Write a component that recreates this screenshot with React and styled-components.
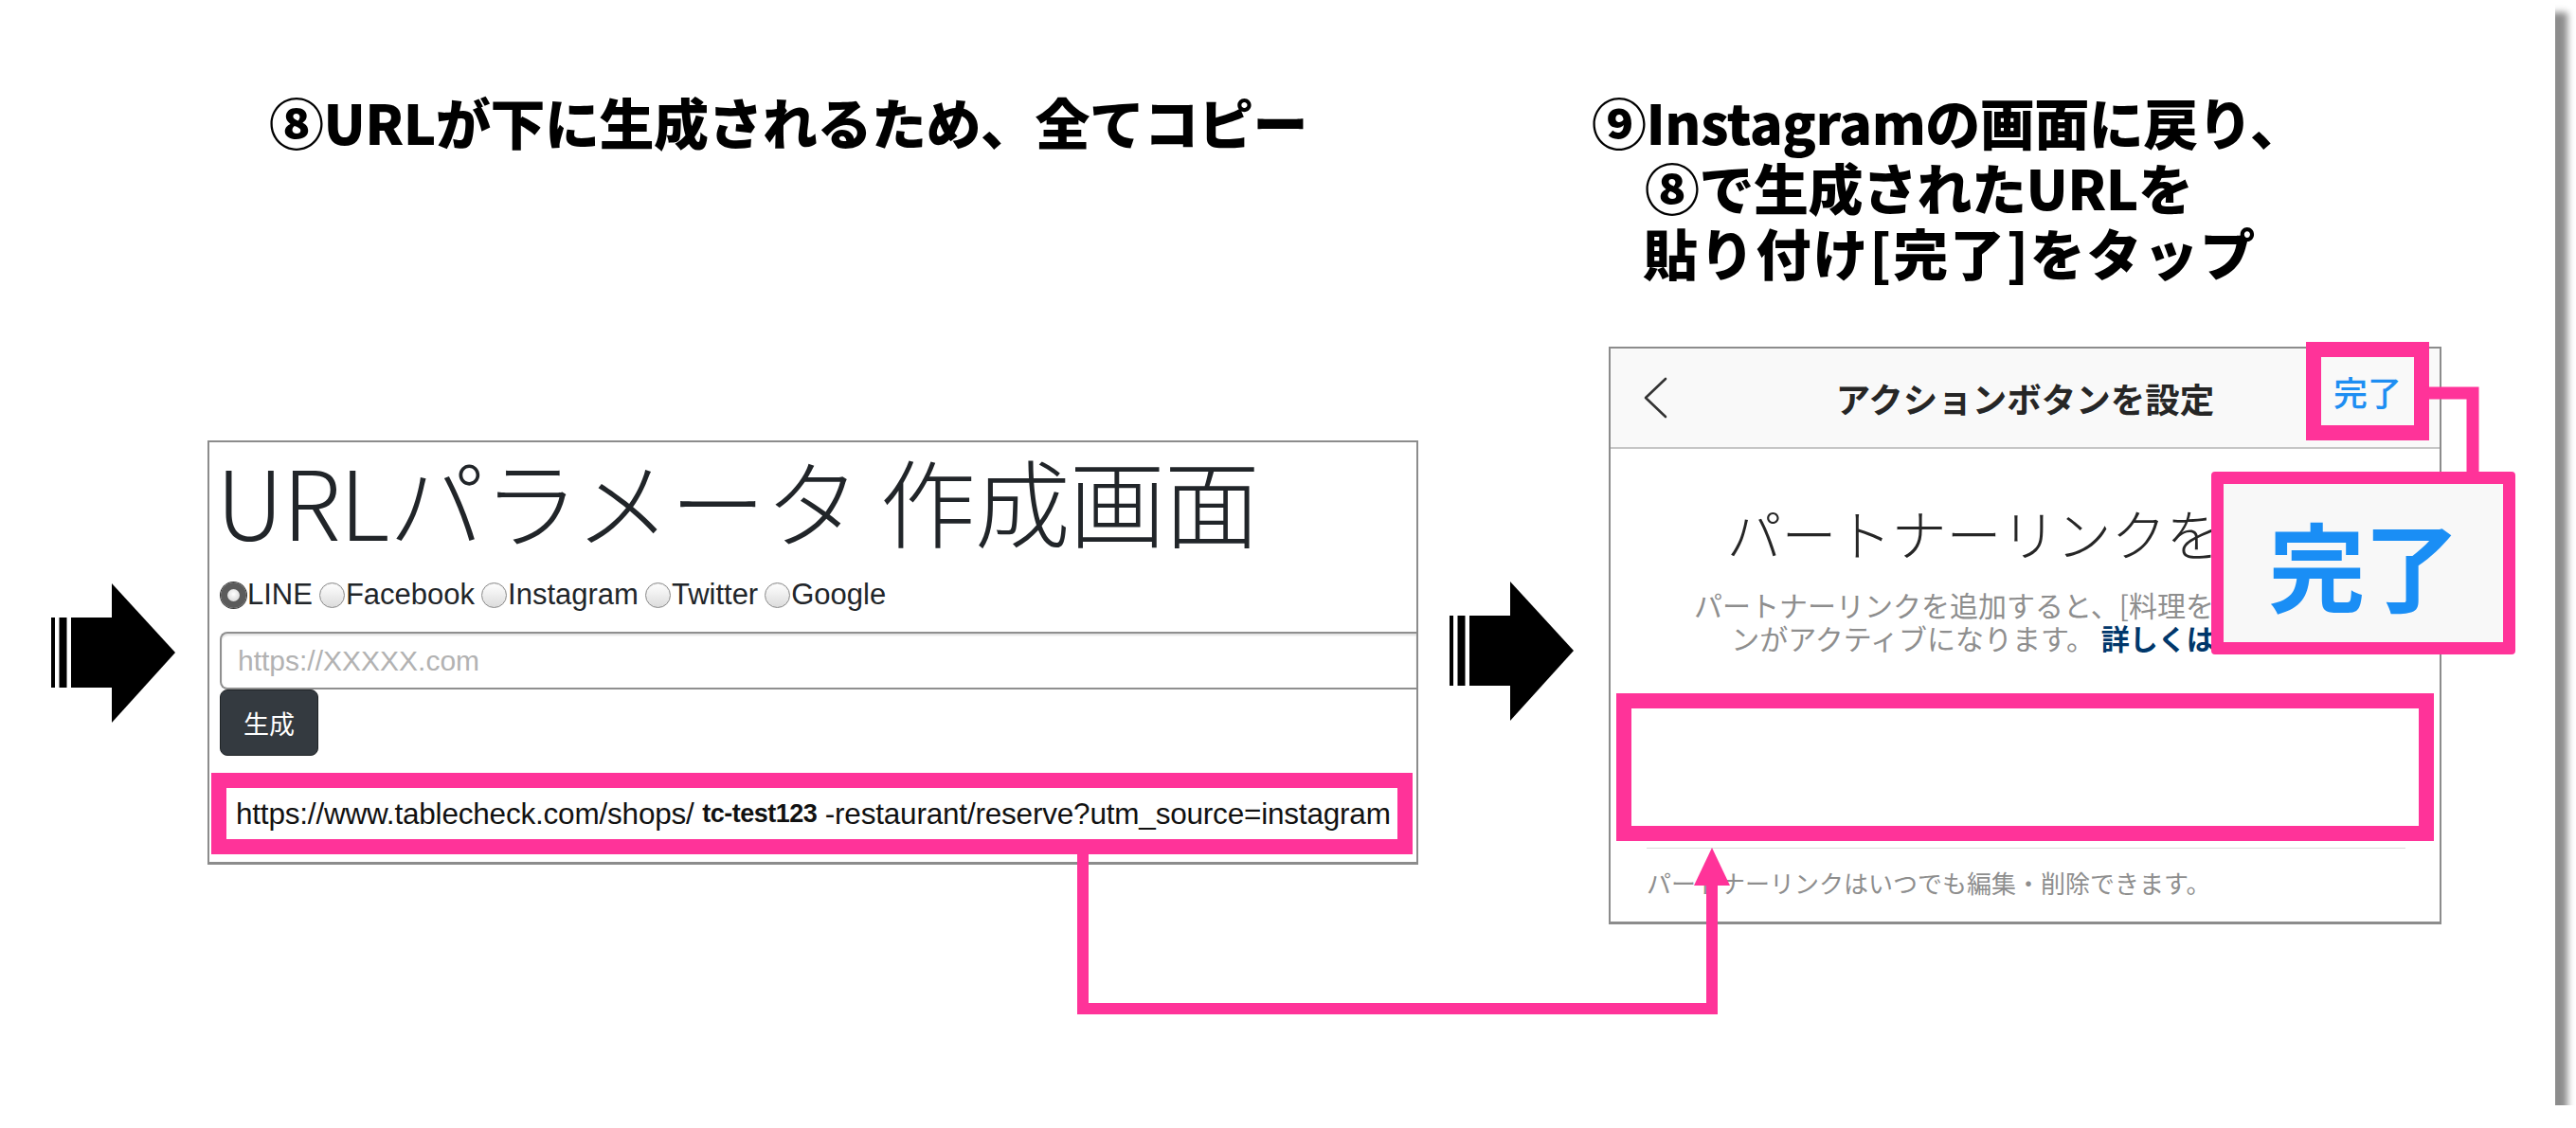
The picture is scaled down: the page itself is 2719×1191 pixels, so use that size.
import React from "react";
import styled, { createGlobalStyle } from "styled-components";

const JP = `"Noto Sans CJK JP", "Noto Sans", sans-serif`;
const LATIN = `"Liberation Sans", Arial, "Noto Sans CJK JP", sans-serif`;
const PINK = "#ff3399";

const Global = createGlobalStyle`
  html, body { margin: 0; padding: 0; background: #ffffff; }
  body { font-family: ${JP}; }
  * { box-sizing: border-box; }
`;

const Card = styled.div`
  position: relative;
  width: 2697px;
  height: 1167px;
  background: #ffffff;
  box-shadow: 13px 13px 7px rgba(0, 0, 0, 0.45);
  display: flex;
`;

const Column = styled.section`
  display: flex;
  flex-direction: column;
  width: ${(p) => (p.$width ? `${p.$width}px` : "auto")};
  flex: ${(p) => (p.$width ? "none" : "1")};
  min-width: 0;
`;

const StepTitle = styled.h2`
  margin: 94px 0 0 ${(p) => p.$left}px;
  font-family: ${JP};
  font-weight: 900;
  font-size: 58px;
  line-height: 69px;
  color: #000;
  white-space: nowrap;
  letter-spacing: -0.5px;
`;

const TitleLine = styled.span`
  display: block;
  padding-left: ${(p) => p.$indent || 0}px;
  letter-spacing: ${(p) => p.$spacing || -0.5}px;
`;

const ContentRow = styled.div`
  display: flex;
  align-items: flex-start;
  margin-top: ${(p) => p.$top}px;
`;

const ArrowBox = styled.div`
  flex: none;
  width: 131px;
  height: 147px;
  margin-left: ${(p) => p.$left}px;
  margin-top: ${(p) => p.$top}px;
  svg { display: block; }
`;

const Arrow = ({ left, top }) => (
  <ArrowBox $left={left} $top={top}>
    <svg width="131" height="147" viewBox="0 0 131 147">
      <rect x="0" y="36" width="4" height="74" fill="#000" />
      <rect x="8.5" y="36" width="8" height="74" fill="#000" />
      <rect x="21" y="36" width="45" height="74" fill="#000" />
      <polygon points="64,0 131,73 64,147" fill="#000" />
    </svg>
  </ArrowBox>
);

/* ---------- left panel (URL parameter form) ---------- */

const FormPanel = styled.div`
  flex: none;
  width: 1278px;
  height: 448px;
  margin-left: 34px;
  border: 2px solid #8c8c8c;
  border-bottom-width: 3px;
  background: #fff;
  padding: 4px 0 0 12px;
`;

const FormHeading = styled.h1`
  margin: 0 0 0 -5px;
  font-family: ${JP};
  font-weight: 300;
  font-size: 101px;
  line-height: 112px;
  color: #212529;
  white-space: nowrap;
  letter-spacing: -1px;
`;

const RadioRow = styled.div`
  display: flex;
  align-items: center;
  margin-top: 27px;
  height: 36px;
  font-family: ${LATIN};
  font-size: 31px;
  color: #212529;
  white-space: nowrap;
`;

const RadioItem = styled.span`
  display: inline-flex;
  align-items: center;
  margin-right: 7px;
`;

const RadioDot = styled.span`
  width: 27px;
  height: 27px;
  border-radius: 50%;
  margin-right: 1px;
  border: ${(p) => (p.$on ? "7px solid #5b5b5b" : "1.5px solid #8a8a8a")};
  background: ${(p) =>
    p.$on
      ? "radial-gradient(circle at 50% 40%, #ffffff, #cfcfcf)"
      : "linear-gradient(#ffffff, #dcdcdc)"};
  box-shadow: ${(p) => (p.$on ? "0 0 0 1px #3a3a3a" : "inset 0 1px 1px rgba(0,0,0,0.08)")};
`;

const UrlInput = styled.input`
  display: block;
  width: 1263px;
  height: 61px;
  margin-top: 21px;
  margin-left: -1px;
  padding: 0 17px;
  border: 2px solid #8f8f8f;
  border-right: none;
  border-radius: 8px 0 0 8px;
  box-shadow: inset 0 2px 2px rgba(0, 0, 0, 0.12);
  font-family: ${LATIN};
  font-size: 30px;
  color: #333;
  background: #fff;
  outline: none;
  &::placeholder { color: #b2b2b2; }
`;

const GenerateButton = styled.button`
  display: block;
  width: 104px;
  height: 70px;
  margin-left: -1px;
  border: 1px solid #1f2326;
  border-radius: 8px;
  background: #343a40;
  color: #ffffff;
  font-family: ${JP};
  font-size: 27px;
  padding: 0;
`;

const UrlHighlight = styled.div`
  width: 1268px;
  height: 86px;
  margin: 18px 0 0 -10px;
  border: 16px solid ${PINK};
  background: #fff;
  display: flex;
  align-items: center;
  padding-left: 10px;
  font-family: ${LATIN};
  font-size: 31.5px;
  letter-spacing: -0.2px;
  color: #111;
  white-space: nowrap;
  overflow: hidden;
`;

const ShopId = styled.span`
  font-family: "Liberation Sans", Arial, sans-serif;
  font-weight: 700;
  font-size: 27px;
  letter-spacing: -0.5px;
`;

/* ---------- right panel (Instagram action button screen) ---------- */

const PhonePanel = styled.div`
  position: relative;
  flex: none;
  width: 879px;
  height: 610px;
  margin-left: 37px;
  border: 2px solid #8c8c8c;
  border-bottom-width: 3px;
  background: #fff;
  display: flex;
  flex-direction: column;
`;

const NavBar = styled.header`
  height: 106px;
  background: #f9f9f9;
  border-bottom: 2px solid #c6c6c6;
  display: grid;
  grid-template-columns: 1fr auto 1fr;
  align-items: center;
`;

const BackButton = styled.span`
  padding-left: 35px;
  display: flex;
  svg { display: block; }
`;

const NavTitle = styled.div`
  font-family: ${JP};
  font-weight: 700;
  font-size: 36.5px;
  color: #262626;
  white-space: nowrap;
`;

const DoneHighlight = styled.span`
  position: relative;
  z-index: 2;
  justify-self: end;
  margin: -14px 11px 0 0;
  border: 16px solid ${PINK};
  width: 130px;
  height: 104px;
  display: flex;
  align-items: center;
  justify-content: center;
  font-family: ${JP};
  font-weight: 500;
  font-size: 36px;
  color: #1e8ef2;
  background: #f9f9f9;
`;

const LinkTitle = styled.div`
  margin-top: 55px;
  padding-left: 8px;
  text-align: center;
  font-family: ${JP};
  font-weight: 300;
  font-size: 58px;
  line-height: 66px;
  color: #262626;
  white-space: nowrap;
`;

const LinkDesc = styled.p`
  margin: 26px 0 0;
  padding-right: 20px;
  text-align: center;
  font-family: ${JP};
  font-size: 30px;
  line-height: 35px;
  color: #8e8e8e;
  white-space: nowrap;
`;

const MoreLink = styled.b`
  font-weight: 700;
  color: #00376b;
`;

const LinkField = styled.div`
  height: 156px;
  margin: 41px 6px 0;
  border: 16px solid ${PINK};
  background: #fff;
`;

const Divider = styled.hr`
  margin: 7px 36px 0 38px;
  border: none;
  border-top: 1px solid #dbdbdb;
`;

const FootNote = styled.div`
  margin: 19px 0 0 38px;
  font-family: ${JP};
  font-size: 26px;
  line-height: 34px;
  color: #8e8e8e;
  white-space: nowrap;
`;

const Callout = styled.div`
  position: absolute;
  z-index: 3;
  left: 634px;
  top: 130px;
  width: 321px;
  height: 193px;
  border: 13px solid ${PINK};
  border-radius: 4px;
  background: #f8f8f8;
  display: flex;
  align-items: center;
  justify-content: center;
  font-family: ${JP};
  font-weight: 700;
  font-size: 102px;
  color: #1a8ef5;
  letter-spacing: -2px;
`;

const Connectors = styled.svg`
  position: absolute;
  left: 0;
  top: 0;
  pointer-events: none;
  z-index: 4;
`;

export default function App() {
  return (
    <>
      <Global />
      <Card>
        <Column $width={1496}>
          <StepTitle $left={284}>⑧URLが下に生成されるため、全てコピー</StepTitle>
          <ContentRow $top={302}>
            <Arrow left={54} top={151} />
            <FormPanel>
              <FormHeading>URLパラメータ 作成画面</FormHeading>
              <RadioRow>
                <RadioItem><RadioDot $on />LINE</RadioItem>
                <RadioItem><RadioDot />Facebook</RadioItem>
                <RadioItem><RadioDot />Instagram</RadioItem>
                <RadioItem><RadioDot />Twitter</RadioItem>
                <RadioItem><RadioDot />Google</RadioItem>
              </RadioRow>
              <UrlInput placeholder="https://XXXXX.com" readOnly />
              <GenerateButton>生成</GenerateButton>
              <UrlHighlight>
                https://www.tablecheck.com/shops/&nbsp;<ShopId>tc-test123</ShopId>&nbsp;-restaurant/reserve?utm_source=instagram
              </UrlHighlight>
            </FormPanel>
          </ContentRow>
        </Column>
        <Column>
          <StepTitle $left={184}>
            <TitleLine>⑨Instagramの画面に戻り、</TitleLine>
            <TitleLine $indent={56}>⑧で生成されたURLを</TitleLine>
            <TitleLine $indent={54} $spacing={1.8}>貼り付け[完了]をタップ</TitleLine>
          </StepTitle>
          <ContentRow $top={65}>
            <Arrow left={34} top={248} />
            <PhonePanel>
              <NavBar>
                <BackButton>
                  <svg width="26" height="44" viewBox="0 0 26 44">
                    <polyline points="23,2 2,22 23,42" fill="none" stroke="#333" strokeWidth="2.6" strokeLinecap="round" strokeLinejoin="round" />
                  </svg>
                </BackButton>
                <NavTitle>アクションボタンを設定</NavTitle>
                <DoneHighlight>完了</DoneHighlight>
              </NavBar>
              <LinkTitle>パートナーリンクを追加</LinkTitle>
              <LinkDesc>
                パートナーリンクを追加すると、[料理を注文]ボタ
                <br />
                ンがアクティブになります。 <MoreLink>詳しくはこちら</MoreLink>
              </LinkDesc>
              <LinkField />
              <Divider />
              <FootNote>パートナーリンクはいつでも編集・削除できます。</FootNote>
              <Callout>完了</Callout>
            </PhonePanel>
          </ContentRow>
        </Column>
        <Connectors width="2697" height="1167" viewBox="0 0 2697 1167">
          <path d="M1143 900 V1065 H1807 V928" fill="none" stroke={PINK} strokeWidth="12" strokeLinejoin="miter" />
          <polygon points="1807,895 1788,935 1826,935" fill={PINK} />
          <path d="M2560 415 H2610 V500" fill="none" stroke={PINK} strokeWidth="13" strokeLinejoin="miter" />
        </Connectors>
      </Card>
    </>
  );
}
